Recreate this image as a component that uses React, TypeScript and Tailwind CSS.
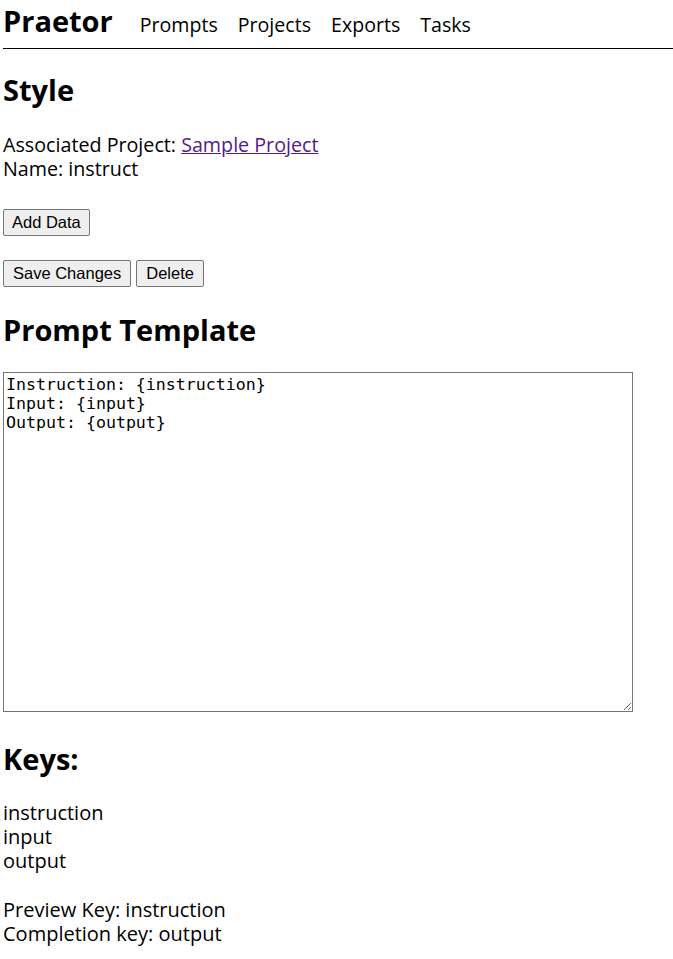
import { useState } from 'react';

export default function App() {
  const [template, setTemplate] = useState('Instruction: {instruction}\nInput: {input}\nOutput: {output}');
  const keys = ['instruction', 'input', 'output'];

  return (
    <div className="min-h-[959px] bg-white text-black pl-[3px] font-['Open_Sans',sans-serif] text-[20px] leading-[24px]">
      {/* top nav */}
      <div className="flex items-baseline h-[49px] border-b border-black pt-[4px]">
        <span className="text-[29px] font-bold leading-[34px]">Praetor</span>
        <nav className="flex gap-[20px] ml-[27px] text-[19.6px]">
          <a className="cursor-pointer">Prompts</a>
          <a className="cursor-pointer">Projects</a>
          <a className="cursor-pointer">Exports</a>
          <a className="cursor-pointer">Tasks</a>
        </nav>
      </div>

      <h2 className="text-[29px] font-bold leading-[34px] mt-[24px]">Style</h2>
      <div className="mt-[26px] text-[19.7px]">
        Associated Project: <a className="text-[#551a8b] underline cursor-pointer">Sample Project</a>
      </div>
      <div className="text-[19.7px]">Name: instruct</div>

      <div className="mt-[28px] font-['Liberation_Sans',Arial,sans-serif] text-[16.5px] leading-[19px]">
        <button className="border border-[#767676] rounded-[2px] bg-[#efefef] px-[8px] py-[3px]">Add Data</button>
      </div>
      <div className="mt-[24px] flex gap-[5px] font-['Liberation_Sans',Arial,sans-serif] text-[16.5px] leading-[19px]">
        <button className="border border-[#767676] rounded-[2px] bg-[#efefef] px-[9px] py-[3px]">Save Changes</button>
        <button className="border border-[#767676] rounded-[2px] bg-[#efefef] px-[9px] py-[3px]">Delete</button>
      </div>

      <h2 className="text-[29px] font-bold leading-[34px] mt-[26px]">Prompt Template</h2>
      <textarea
        value={template}
        onChange={(e) => setTemplate(e.target.value)}
        className="block mt-[25px] w-[630px] h-[340px] border border-[#767676] p-[2px] font-['DejaVu_Sans_Mono',monospace] text-[16.6px] leading-[19px] outline-none resize"
      />

      <h2 className="text-[29px] font-bold leading-[34px] mt-[30px]">Keys:</h2>
      <div className="mt-[25px]">
        {keys.map((k) => (
          <div key={k}>{k}</div>
        ))}
      </div>
      <div className="mt-[25px]">Preview Key: instruction</div>
      <div>Completion key: output</div>
    </div>
  );
}
